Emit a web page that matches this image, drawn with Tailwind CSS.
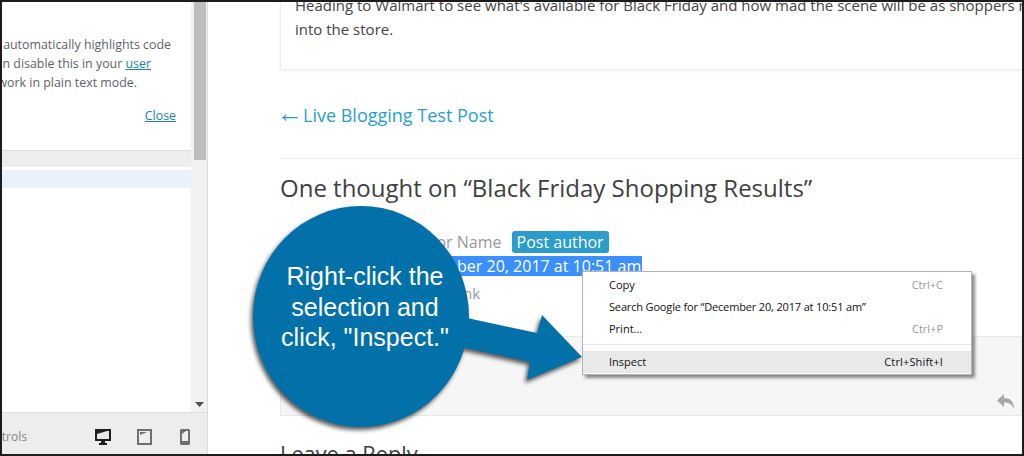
<!DOCTYPE html>
<html><head><meta charset="utf-8"><script src="https://cdn.jsdelivr.net/npm/@tailwindcss/browser@4"></script></head>
<body class="m-0 bg-white">
<div class="relative w-[1024px] h-[456px] overflow-hidden border-2 border-[#1c1c1c] bg-white flex font-['Open_Sans',sans-serif]">
  <aside class="w-[206px] shrink-0 h-full flex flex-col border-r border-[#dcdcdc]">
    <div class="flex-1 flex min-h-0">
      <div class="w-[189px] shrink-0 overflow-hidden flex flex-col">
        <div class="pt-[33px] pr-[21px] text-[12.4px] leading-[19px] text-[#5f6368] flex flex-col items-end whitespace-nowrap">
          <p class="mr-[-1px]">automatically highlights code</p>
          <p class="mr-[19px]">an disable this in your <a class="text-[#1a7fb5] underline">user</a></p>
          <p class="mr-[33px]">work in plain text mode.</p>
          <a class="mt-[14px] mr-[-6px] text-[#1a7fb5] underline">Close</a>
        </div>
        <div class="mt-[25px] h-[17px] bg-[#ededed] border-t border-[#dddddd]"></div>
        <div class="mt-[3px] h-[18px] bg-[#e8f1fc]"></div>
      </div>
      <div class="w-[16px] shrink-0 bg-[#f1f1f1] flex flex-col justify-between items-center pl-[2px]">
        <div class="w-[12px] h-[158px] bg-[#bdbdbd]"></div>
        <svg class="mb-[5px] mr-[1px]" width="9" height="5" viewBox="0 0 9 5"><path d="M0 0H9L4.500 5Z" fill="#505050"/></svg>
      </div>
    </div>
    <div class="h-[42px] shrink-0 bg-[#ededed] border-t border-[#dddddd] flex items-center pt-[6px] text-[12px] text-[#80868b]">
      <span class="w-[25px] text-right overflow-hidden flex justify-end">trols</span>
      <div class="ml-[68px] flex items-center gap-[26px]">
        <svg width="16" height="16" viewBox="0 0 16 16"><path d="M0 0H16V12H10V14H12V16H4V14H6V12H0Z" fill="#1f1f1f"/><path d="M2 2H14V10H2Z" fill="#e8e8e8"/><path d="M2 2H12L2 5Z" fill="#1f1f1f"/></svg>
        <svg width="15" height="16" viewBox="0 0 15 16"><path d="M0 0H15V16H0Z" fill="#6f6f6f"/><path d="M2 2H13V14H2Z" fill="#eeeeee"/><path d="M3 3H10L3 6Z" fill="#6f6f6f"/></svg>
        <svg class="ml-[2px]" width="10" height="16" viewBox="0 0 10 16"><path d="M1 0H9L10 1V15L9 16H1L0 15V1Z" fill="#6f6f6f"/><path d="M2 2H8V12H2Z" fill="#eeeeee"/><path d="M2 2H6L2 5Z" fill="#6f6f6f"/></svg>
      </div>
    </div>
  </aside>
  <main class="flex-1 min-w-0 pl-[72px] overflow-hidden">
    <section class="-mt-[9px] h-[77px] pl-[14px] border-l border-b border-[#eeeeee] shadow-[0_1px_3px_rgba(0,0,0,0.06)] text-[15px] leading-[24px] text-[#444444] whitespace-nowrap">
      <p>Heading to Walmart to see what's available for Black Friday and how mad the scene will be as shoppers rush</p>
      <p>into the store.</p>
    </section>
    <a class="block mt-[31px] text-[18px] leading-[28px] text-[#2a9fd0] whitespace-nowrap"><span class="inline-block w-[23px] -ml-[3px] mr-[3px] text-[26px] leading-[22px]">←</span>Live Blogging Test Post</a>
    <div class="mt-[29px] h-px bg-[#eeeeee]"></div>
    <h2 class="mt-[14px] text-[24px] leading-[30px] text-[#404040] font-normal whitespace-nowrap">One thought on “Black Friday Shopping Results”</h2>
    <div class="mt-[28px] ml-[78px] flex items-center text-[16px] leading-[22px] text-[#999999] whitespace-nowrap">
      <span class="ml-[43px]">Author Name</span>
      <span class="ml-[10px] px-[5px] rounded-[3px] bg-[#2b9ccb] text-white">Post author</span>
    </div>
    <div class="mt-[3px] flex text-[16px] leading-[20px] whitespace-nowrap">
      <span class="ml-[90px] pl-[35px] pr-px bg-[#3b90ff] text-white">December 20, 2017 at 10:51 am</span>
    </div>
    <div class="mt-[7px] ml-[145px] text-[15px] leading-[20px] text-[#999999]">Edit link</div>
    <div class="mt-[33px] h-[80px] bg-[#f6f6f6] border border-[#e8e8e8] flex items-end justify-end pr-[7px] pb-[6px]">
      <svg width="17" height="15" viewBox="0 0 17 15"><path d="M7 0V4C13 4 17 7 17 15C15 10 12 8.500 7 8.500V13L0 6.500Z" fill="#a8a8a8"/></svg>
    </div>
    <h2 class="mt-[24px] text-[21.800px] leading-[28px] text-[#404040] font-normal whitespace-nowrap">Leave a Reply</h2>
  </main>

  <svg class="absolute left-[250px] top-[204px] drop-shadow-[-2px_3px_2px_rgba(0,0,0,0.65)]" width="340" height="228" viewBox="0 0 340 228">
    <path d="M215 112L285 127L290 109L330 151L275 174L278 156L210 141Z" fill="#0271aa"/>
    <ellipse cx="109" cy="110.500" rx="108" ry="110.500" fill="#0271aa"/>
  </svg>
  <div class="absolute left-[251px] top-[259px] w-[224px] text-center text-white text-[25px] leading-[30.500px] font-['Liberation_Sans',sans-serif]">
    <p>Right-click the</p><p>selection and</p><p>click, "Inspect."</p>
  </div>

  <div class="absolute left-[580px] top-[269px] w-[390px] h-[104px] bg-white border border-[#b4b4b4] shadow-[3px_3px_3px_rgba(0,0,0,0.45)] text-[11px] leading-[22px] text-[#111111]">
    <div class="flex justify-between h-[22px] pl-[26px] pr-[28px] mt-[2px]"><span>Copy</span><span class="text-[#9a9a9a]">Ctrl+C</span></div>
    <div class="flex justify-between h-[22px] pl-[26px] pr-[28px]"><span class="tracking-[-0.16px]">Search Google for “December 20, 2017 at 10:51 am”</span></div>
    <div class="flex justify-between h-[22px] pl-[26px] pr-[28px]"><span>Print...</span><span class="text-[#9a9a9a]">Ctrl+P</span></div>
    <div class="mt-[4px] h-px bg-[#e6e6e6]"></div>
    <div class="mt-[6px] flex justify-between h-[22px] pl-[26px] pr-[28px] bg-[#e9e9e9]"><span>Inspect</span><span class="tracking-[0.15px]">Ctrl+Shift+I</span></div>
  </div>
</div>
</body></html>
